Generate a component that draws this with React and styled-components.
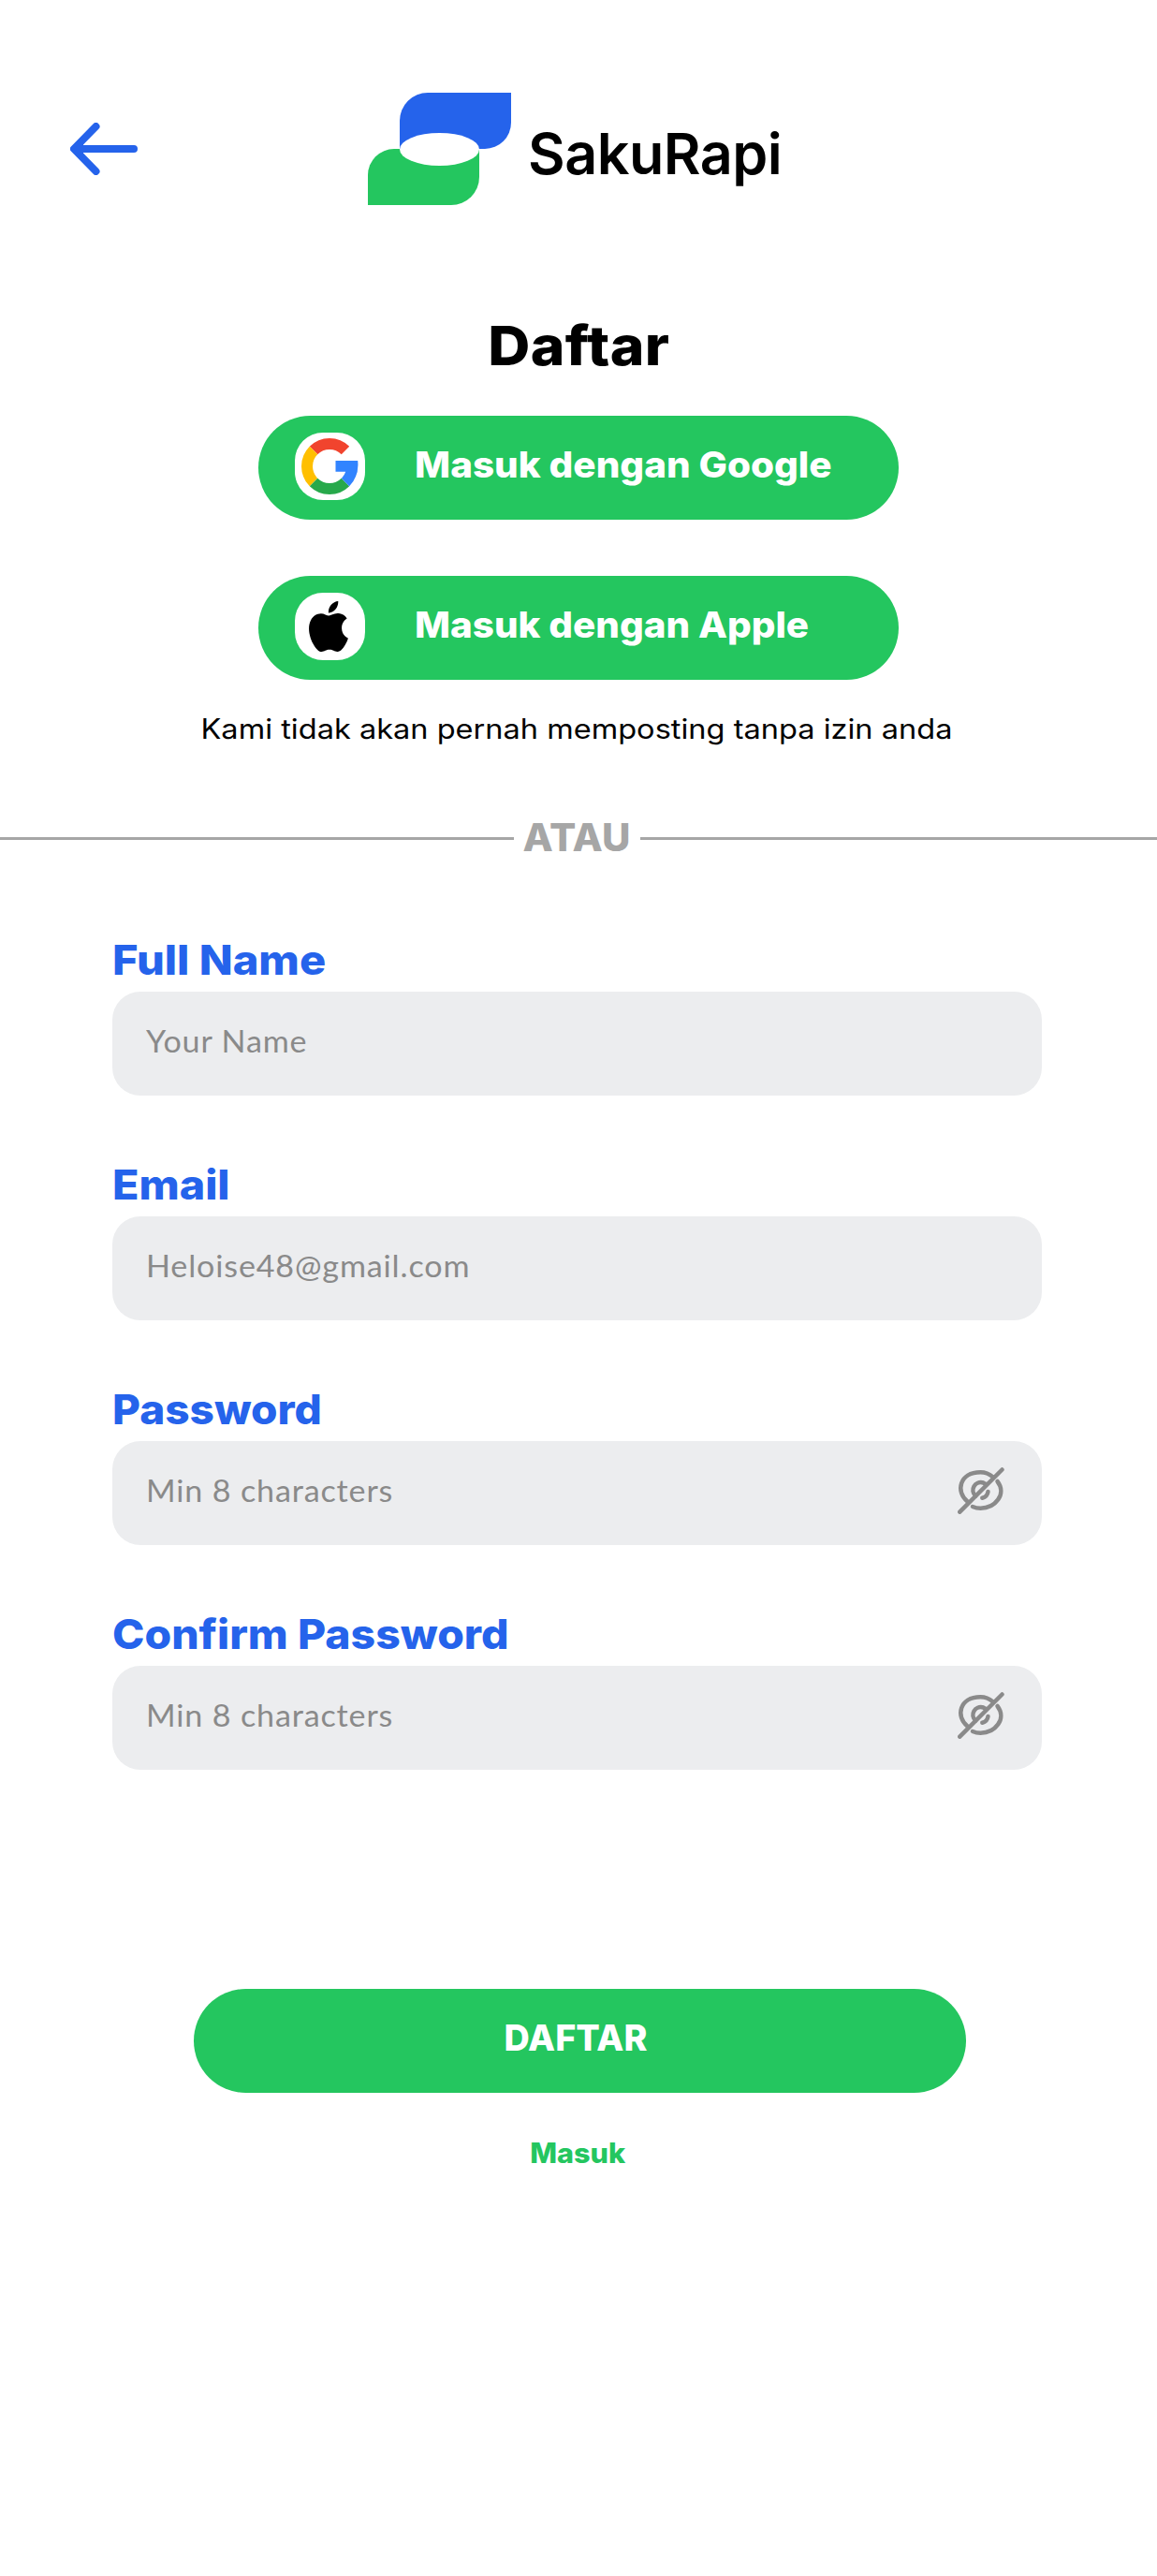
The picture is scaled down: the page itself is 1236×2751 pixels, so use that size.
import React from "react";
import styled, { createGlobalStyle } from "styled-components";

const GREEN = "#24c65f";
const BLUE = "#2563eb";
const MUTED = "#8a8a8a";

const GlobalStyle = createGlobalStyle`
  *, *::before, *::after { box-sizing: border-box; }
  body { margin: 0; background: #fff; }
  button { border: 0; padding: 0; background: none; font: inherit; cursor: pointer; }
  svg { display: block; flex: none; }
`;

const Page = styled.main`
  display: flex;
  flex-direction: column;
  align-items: center;
  width: 1236px;
  min-height: 2751px;
  padding-top: 99px;
  background: #fff;
  color: #000;
  font-family: Inter, "Open Sans", sans-serif;
  font-variant-ligatures: none;
  white-space: nowrap;
`;

const Header = styled.header`
  display: flex;
  align-items: flex-start;
  width: 100%;
  height: 120px;
  padding-left: 75px;
`;

const BackButton = styled.button`
  margin: 32px 246px 0 0;
`;

const Brand = styled.div`
  display: flex;
  gap: 18px;
`;

const BrandName = styled.span`
  margin-top: 29px;
  font-size: 61px;
  font-weight: 600;
  line-height: 72px;
  letter-spacing: -0.5px;
`;

const Title = styled.h1`
  margin: 114px 0 39px;
  font-size: 58px;
  font-weight: 800;
  line-height: 72px;
  letter-spacing: 0.4px;
  transform: scaleX(1.075);
`;

const SocialList = styled.div`
  display: flex;
  flex-direction: column;
  gap: 60px;
`;

const PillButton = styled.button`
  display: flex;
  align-items: center;
  width: ${(p) => p.$width}px;
  height: 111px;
  border-radius: 56px;
  background: ${GREEN};
  color: #fff;
`;

const SocialButton = styled(PillButton)`
  padding: 0 0 3px 39px;
`;

const SubmitButton = styled(PillButton)`
  justify-content: center;
  margin: 234px 0 42px 3px;
  padding: 0 9px 3px 0;
`;

const IconTile = styled.span`
  display: flex;
  align-items: center;
  justify-content: center;
  width: 75px;
  height: 72px;
  margin-right: 53px;
  border-radius: 30px;
  background: #fff;
`;

const PillText = styled.span`
  margin-bottom: 4px;
  font-size: 38.5px;
  font-weight: 800;
  line-height: 52px;
  transform: scaleX(${(p) => p.$stretch});
  transform-origin: ${(p) => p.$origin || "left"};
`;

const Note = styled.p`
  margin: 30px 4px 64px 0;
  font-size: 29.5px;
  line-height: 44px;
  transform: scaleX(1.103);
`;

const Divider = styled.div`
  display: grid;
  grid-template-columns: 549px 135px 1fr;
  align-items: center;
  width: 100%;
  height: 60px;
  color: #a6a6a6;
`;

const Rule = styled.span`
  height: 3px;
  margin-top: 3px;
  background: #a6a6a6;
`;

const DividerText = styled.span`
  padding: 2px 1px 0 0;
  text-align: center;
  font-size: 40.5px;
  font-weight: 800;
  line-height: 58px;
  transform: scaleX(1.035);
`;

const Form = styled.form`
  display: flex;
  flex-direction: column;
  gap: 65px;
  width: 993px;
  margin: 71px 3px 0 0;
`;

const Field = styled.div`
  display: flex;
  flex-direction: column;
  align-items: flex-start;
  gap: 4px;
`;

const Label = styled.label`
  height: 60px;
  color: ${BLUE};
  font-size: 44px;
  font-weight: 800;
  line-height: 60px;
  transform: scaleX(${(p) => p.$stretch});
  transform-origin: left;
`;

const Control = styled.div`
  display: flex;
  align-items: center;
  justify-content: space-between;
  width: 100%;
  height: 111px;
  padding: 0 40px 6px 36px;
  border-radius: 30px;
  background: #ecedef;
`;

const Placeholder = styled.span`
  color: ${MUTED};
  font-family: Lato, "Open Sans", sans-serif;
  font-size: 32px;
  line-height: 44px;
  letter-spacing: 0.8px;
  transform: scaleX(1.065);
  transform-origin: left;
`;

const SignInLink = styled.a`
  margin-right: 2px;
  color: ${GREEN};
  font-size: 29.5px;
  font-weight: 800;
  line-height: 44px;
  transform: scaleX(1.035);
`;

const ArrowIcon = () => (
  <svg width="72" height="56" viewBox="0 0 72 56" fill="none" stroke={BLUE} strokeWidth="8" strokeLinecap="round" strokeLinejoin="round">
    <path d="M27.500 4 4 28l23.500 24M6 28H68" />
    <path fill={BLUE} stroke="none" d="M4 28 14 18V38Z" />
  </svg>
);

const LogoMark = () => (
  <svg width="153" height="120" viewBox="0 0 153 120">
    <path fill={BLUE} d="M34 60V30A30 30 0 0 1 64 0H153V32A28 28 0 0 1 125 60Z" />
    <path fill={GREEN} d="M0 120V88A28 28 0 0 1 28 60H119V90A30 30 0 0 1 89 120Z" />
    <ellipse cx="76.500" cy="60.500" rx="42.500" ry="17.500" fill="#fff" />
  </svg>
);

const GoogleIcon = () => (
  <svg width="61" height="60" viewBox="-30 -30 61 60">
    <g fill="none" strokeWidth="12">
      <path stroke="#f1442e" d="M-16.970 -16.970A24 24 0 0 1 16.970 -16.970" />
      <path stroke="#ffbf00" d="M-16.970 16.970A24 24 0 0 1 -16.970 -16.970" />
      <path stroke="#27a94b" d="M16.970 16.970A24 24 0 0 1 -16.970 16.970" />
    </g>
    <path fill="#3284ff" d="M6.500 -6H30.200Q32 10 21.210 21.210L12.730 12.730Q16 9.500 17.200 5.700H6.500Z" />
  </svg>
);

const AppleMark = styled.svg`
  margin-right: 3px;
`;

const AppleIcon = () => (
  <AppleMark width="42" height="54" viewBox="2.200 0 19.600 24" preserveAspectRatio="none">
    <path d="M12.152 6.896c-.948 0-2.415-1.078-3.960-1.040-2.040.027-3.910 1.183-4.961 3.014-2.117 3.675-.546 9.103 1.519 12.090 1.013 1.454 2.208 3.090 3.792 3.039 1.520-.065 2.090-.987 3.935-.987 1.831 0 2.350.987 3.960.948 1.637-.026 2.676-1.480 3.676-2.948 1.156-1.688 1.636-3.325 1.662-3.415-.039-.013-3.182-1.221-3.220-4.857-.026-3.040 2.480-4.494 2.597-4.559-1.429-2.090-3.623-2.324-4.390-2.376-2-.156-3.675 1.090-4.610 1.090zM15.530 3.830c.843-1.012 1.400-2.427 1.245-3.830-1.207.052-2.662.805-3.532 1.818-.780.896-1.454 2.338-1.273 3.714 1.338.104 2.715-.688 3.559-1.701" />
  </AppleMark>
);

const EyeOffIcon = () => (
  <svg width="50" height="50" viewBox="0 0 50 50" fill="none" stroke={MUTED} strokeWidth="4.500" strokeLinecap="round">
    <path d="M2.300 47.700 47.500 2.500" />
    <path d="M10.500 36.500C-2.500 26 2 5.200 24.300 5.200 29.500 5.200 34 7 37.500 10.200" />
    <path d="M42.500 15C53 28.500 40 43.700 24.500 43.700 21.500 43.700 18.800 43.200 16 42" />
    <path d="M19.300 30.500C12.500 24.500 18.500 14 27.500 16.500L30 18" />
    <path d="M32.500 26C32 29.500 29.500 32 26.300 32.800" />
  </svg>
);

const fields = [
  { label: "Full Name", stretch: 1.068, hint: "Your Name" },
  { label: "Email", stretch: 1.06, hint: "Heloise48@gmail.com" },
  { label: "Password", stretch: 1.045, hint: "Min 8 characters", secret: true },
  { label: "Confirm Password", stretch: 1.053, hint: "Min 8 characters", secret: true },
];

export default function App() {
  return (
    <>
      <GlobalStyle />
      <Page>
        <Header>
          <BackButton aria-label="Kembali"><ArrowIcon /></BackButton>
          <Brand>
            <LogoMark />
            <BrandName>SakuRapi</BrandName>
          </Brand>
        </Header>
        <Title>Daftar</Title>
        <SocialList>
          <SocialButton $width={684}>
            <IconTile><GoogleIcon /></IconTile>
            <PillText $stretch={1.05}>Masuk dengan Google</PillText>
          </SocialButton>
          <SocialButton $width={684}>
            <IconTile><AppleIcon /></IconTile>
            <PillText $stretch={1.048}>Masuk dengan Apple</PillText>
          </SocialButton>
        </SocialList>
        <Note>Kami tidak akan pernah memposting tanpa izin anda</Note>
        <Divider>
          <Rule />
          <DividerText>ATAU</DividerText>
          <Rule />
        </Divider>
        <Form>
          {fields.map((f) => (
            <Field key={f.label}>
              <Label $stretch={f.stretch}>{f.label}</Label>
              <Control>
                <Placeholder>{f.hint}</Placeholder>
                {f.secret && <EyeOffIcon />}
              </Control>
            </Field>
          ))}
        </Form>
        <SubmitButton $width={825}>
          <PillText $stretch={0.98} $origin="center">DAFTAR</PillText>
        </SubmitButton>
        <SignInLink>Masuk</SignInLink>
      </Page>
    </>
  );
}
